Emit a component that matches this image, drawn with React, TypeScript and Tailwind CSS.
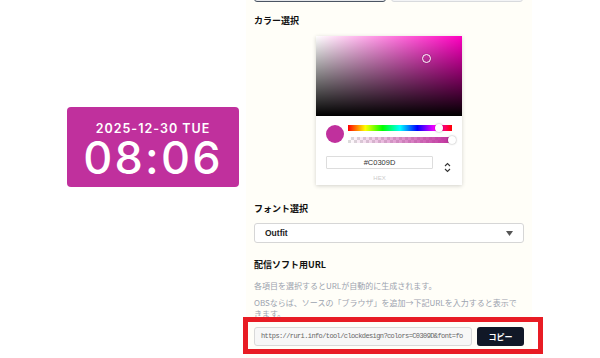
const jp = "font-['Noto_Sans_CJK_JP','Noto_Sans',sans-serif]";

function ColorPicker() {
  return (
    <div className="mx-auto w-[146px] bg-white shadow-[0_1px_4px_rgba(0,0,0,0.18)]">
      {/* saturation / value area */}
      <div className="relative h-[80px] bg-[#ff00c1]">
        <div className="absolute inset-0 bg-[linear-gradient(to_right,#fff,rgba(255,255,255,0))]" />
        <div className="absolute inset-0 bg-[linear-gradient(to_top,#000,rgba(0,0,0,0))]" />
        <div className="absolute left-[106px] top-[18px] h-[9px] w-[9px] rounded-full border border-white shadow-[0_0_1px_rgba(0,0,0,0.5)]" />
      </div>

      <div className="flex items-center gap-[4px] px-[10px] pt-[9px]">
        <div className="h-[18px] w-[18px] shrink-0 rounded-full bg-[#C0309D]" />
        <div className="flex flex-1 flex-col gap-[6px]">
          <div className="relative h-[6px] bg-[linear-gradient(to_right,#f00,#ff0,#0f0,#0ff,#00f,#f0f,#f00)]">
            <div className="absolute left-[87px] top-[-1px] h-[8px] w-[8px] rounded-full bg-white shadow-[0_0_2px_rgba(0,0,0,0.4)]" />
          </div>
          <div className="relative h-[6px] bg-[repeating-conic-gradient(#ddd_0_25%,#fff_0_50%)] bg-[length:6px_6px]">
            <div className="absolute inset-0 bg-[linear-gradient(to_right,rgba(192,48,157,0),#C0309D)]" />
            <div className="absolute right-[-4px] top-[-1px] h-[8px] w-[8px] rounded-full bg-white shadow-[0_0_2px_rgba(0,0,0,0.4)]" />
          </div>
        </div>
      </div>

      <div className="flex items-start px-[10px] pt-[13px]">
        <div className="flex flex-col items-center">
          <div className="flex h-[13px] w-[107px] items-center justify-center rounded-[1px] border border-[#ddd] font-['Liberation_Sans',sans-serif] text-[7.5px] text-[#333]">
            #C0309D
          </div>
          <div className="pb-[3px] pt-[6px] font-['Liberation_Sans',sans-serif] text-[6px] leading-[7px] text-[#ccc]">HEX</div>
        </div>
        <div className="ml-[11px] mt-[6px] flex flex-col items-center gap-[1px]">
          <svg width="7" height="5" viewBox="0 0 7 5" fill="none" stroke="#333" strokeWidth="1.1">
            <path d="M1 4 L3.5 1.5 L6 4" />
          </svg>
          <svg width="7" height="5" viewBox="0 0 7 5" fill="none" stroke="#333" strokeWidth="1.1">
            <path d="M1 1 L3.5 3.5 L6 1" />
          </svg>
        </div>
      </div>
    </div>
  );
}

export default function App() {
  return (
    <div className={`flex h-[358px] w-[600px] overflow-hidden bg-white ${jp}`}>
      {/* preview column */}
      <div className="w-[246px] shrink-0 pl-[67px] pt-[107px]">
        <div className="flex h-[80px] w-[172px] flex-col items-center rounded-[4px] bg-[#C0309D] pt-[15px] font-['Inter',sans-serif] text-white">
          <div className="text-[12.5px] font-semibold leading-[14px] tracking-[0.08em]">2025-12-30 TUE</div>
          <div className="text-[45px] font-medium leading-[43px] tracking-[0.05em]">08:06</div>
        </div>
      </div>

      {/* settings panel */}
      <div className="w-[286px] shrink-0 bg-[#fffef8] px-[8px]">
        <div className="-mt-[30px] grid h-[32px] grid-cols-2 gap-[5px] pr-[1px]">
          <div className="rounded-b-[3px] border-[1.5px] border-[#4b5563] bg-[#e5e7eb]" />
          <div className="rounded-b-[3px] border border-[#d8dadd] bg-[#f3f4f6]" />
        </div>

        <h2 className="mt-[13px] text-[9px] font-bold leading-[12px] text-[#111]">カラー選択</h2>
        <div className="mt-[9px]">
          <ColorPicker />
        </div>

        <h2 className="mt-[18px] text-[9px] font-bold leading-[12px] text-[#111]">フォント選択</h2>
        <div className="mt-[8px] flex h-[20px] items-center justify-between rounded-[3px] border border-[#d6d6d6] bg-white pl-[10px] pr-[10px]">
          <span className="font-['Liberation_Sans',sans-serif] text-[8.5px] font-bold text-[#222]">Outfit</span>
          <svg width="7" height="5" viewBox="0 0 7 5">
            <path d="M0 0 H7 L3.5 5 Z" fill="#555" />
          </svg>
        </div>

        <h2 className="mt-[16px] text-[9px] font-bold leading-[12px] text-[#111]">配信ソフト用URL</h2>
        <p className="mt-[9px] text-[8px] leading-[11px] text-[#9ca3af]">各項目を選択するとURLが自動的に生成されます。</p>
        <p className="mt-[6px] text-[8px] leading-[11px] text-[#9ca3af]">
          OBSならば、ソースの「ブラウザ」を追加→下記URLを入力すると表示できます。
        </p>

        <div className="relative mt-[8px] flex h-[19px] gap-[5px]">
          <div className="flex flex-1 items-center overflow-hidden whitespace-nowrap rounded-[3px] border border-[#d9d9d9] bg-[#f7f7f7] pl-[6px] font-['Liberation_Mono',monospace] text-[7px] tracking-[-0.6px] text-[#666]">
            https://ruri.info/tool/clockdesign?colors=C0309D&amp;font=fo
          </div>
          <button className="flex w-[47px] items-center justify-center rounded-[3px] bg-[#111827] text-[8px] font-bold text-white">
            コピー
          </button>
          <div className="pointer-events-none absolute bottom-[-8px] left-[-11px] right-[-19px] top-[-10px] border-[5px] border-[#e81c24]" />
        </div>
      </div>
    </div>
  );
}
